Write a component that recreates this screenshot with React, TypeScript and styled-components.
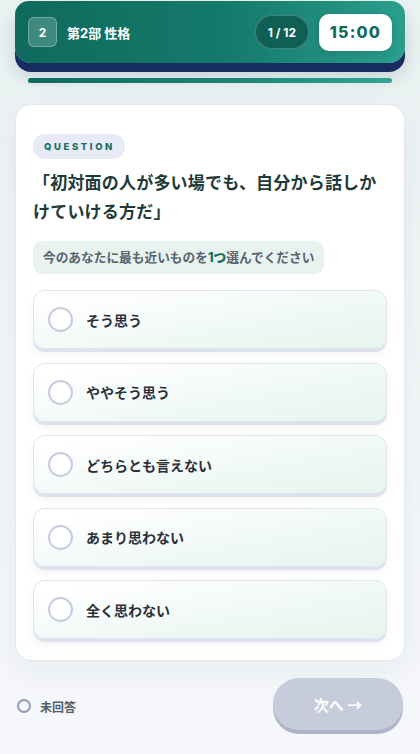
import React from 'react';
import styled, { createGlobalStyle } from 'styled-components';

const GlobalStyle = createGlobalStyle`
  html, body {
    margin: 0;
    padding: 0;
  }
  body {
    font-family: "Inter", "Noto Sans CJK JP", sans-serif;
    background: linear-gradient(180deg, #e9f1f1 0%, #f1f5f6 45%, #f6f7fa 100%);
    min-height: 754px;
  }
  * { box-sizing: border-box; }
`

const Screen = styled.div`
  width: 420px;
  min-height: 754px;
  padding: 1px 15px 0;
  display: flex;
  flex-direction: column;
`

const Header = styled.header`
  height: 62px;
  border-radius: 14px 14px 16px 16px;
  background: linear-gradient(90deg, #0f6a5d 0%, #157a6b 55%, #2a9e8c 100%);
  box-shadow: 0 9px 0 #172c60, 0 14px 18px rgba(20, 60, 70, 0.18);
  display: flex;
  align-items: center;
  padding: 0 13px;
  gap: 10px;
`

const PartBadge = styled.div`
  width: 29px;
  height: 30px;
  border-radius: 6px;
  background: rgba(255, 255, 255, 0.2);
  border: 1px solid rgba(255, 255, 255, 0.28);
  color: #fff;
  font-size: 12px;
  font-weight: 700;
  display: flex;
  align-items: center;
  justify-content: center;
`

const PartTitle = styled.div`
  color: #fff;
  font-size: 13px;
  font-weight: 700;
  flex: 1;
`

const Counter = styled.div`
  height: 34px;
  padding: 0 12px;
  border-radius: 17px;
  background: #0f5f55;
  border: 1px solid rgba(255, 255, 255, 0.22);
  color: #fff;
  font-size: 12px;
  font-weight: 700;
  display: flex;
  align-items: center;
`

const Timer = styled.div`
  height: 37px;
  width: 73px;
  border-radius: 10px;
  background: #fff;
  color: #12695c;
  font-size: 16px;
  font-weight: 800;
  letter-spacing: 1.2px;
  display: flex;
  align-items: center;
  justify-content: center;
  box-shadow: 0 2px 6px rgba(0, 0, 0, 0.12);
`

const Progress = styled.div`
  margin: 15px 13px 0;
  height: 5px;
  border-radius: 3px;
  background: linear-gradient(90deg, #0f6a5d 0%, #1b8473 55%, #2ea692 100%);
`

const Card = styled.section`
  margin-top: 21px;
  background: #fff;
  border-radius: 16px;
  border: 1px solid #e3e8ee;
  box-shadow: 0 10px 30px rgba(40, 70, 90, 0.06);
  padding: 29px 17px 21px;
`

const Tag = styled.div`
  display: inline-flex;
  align-items: center;
  height: 25px;
  padding: 0 10px 0 11px;
  border-radius: 12px;
  background: #e8ebf7;
  color: #15705f;
  font-size: 9.5px;
  font-weight: 800;
  letter-spacing: 2.6px;
`

const Question = styled.h2`
  margin: 10px 0 0;
  font-size: 17px;
  line-height: 29px;
  font-weight: 700;
  letter-spacing: 0.2px;
  color: #1e3b37;
`

const Hint = styled.div`
  display: inline-block;
  margin-top: 14px;
  padding: 0 10px;
  height: 33px;
  line-height: 33px;
  border-radius: 9px;
  background: #e8f3f0;
  color: #56626e;
  font-size: 12.7px;
  font-weight: 700;
  b {
    color: #15705f;
    font-weight: 800;
  }
`

const Options = styled.ul`
  list-style: none;
  margin: 16px 0 0;
  padding: 0;
  display: flex;
  flex-direction: column;
  gap: 13.5px;
`

const Option = styled.li`
  height: 59px;
  border-radius: 12px;
  border: 1px solid #dfe5ea;
  background: linear-gradient(170deg, #ffffff 10%, #f1f9f7 55%, #e6f4f1 100%);
  box-shadow: 0 3px 0 #dde1ed, 0 6px 10px rgba(60, 80, 110, 0.06);
  display: flex;
  align-items: center;
  padding-left: 14px;
  gap: 13px;
  font-size: 14px;
  font-weight: 700;
  color: #2b303a;
`

const Radio = styled.span<{ $size: number }>`
  width: ${p => p.$size}px;
  height: ${p => p.$size}px;
  border-radius: 50%;
  background: #fff;
  border: 2px solid #c6cbe0;
  flex-shrink: 0;
`

const Footer = styled.footer`
  margin-top: 17px;
  display: flex;
  align-items: center;
  justify-content: space-between;
  padding: 0 2px;
`

const Status = styled.div`
  display: flex;
  align-items: center;
  gap: 9px;
  font-size: 12px;
  font-weight: 700;
  color: #555d6b;
  ${Radio} {
    border-color: #8f9dbb;
    background: transparent;
  }
`

const NextButton = styled.button`
  width: 130px;
  height: 52px;
  border: none;
  border-radius: 26px;
  background: #c6ccdc;
  box-shadow: 0 4px 0 #aeb5c9;
  color: #fff;
  font-family: "Noto Sans CJK JP", sans-serif;
  font-size: 15px;
  font-weight: 700;
  margin-bottom: 4px;
`

const choices = ['そう思う', 'ややそう思う', 'どちらとも言えない', 'あまり思わない', '全く思わない'];

const App = () => {
  return (
    <Screen>
      <GlobalStyle />
      <Header>
        <PartBadge>2</PartBadge>
        <PartTitle>第2部 性格</PartTitle>
        <Counter>1 / 12</Counter>
        <Timer>15:00</Timer>
      </Header>
      <Progress />
      <Card>
        <Tag>QUESTION</Tag>
        <Question>「初対面の人が多い場でも、自分から話しかけていける方だ」</Question>
        <Hint>今のあなたに最も近いものを<b>1つ</b>選んでください</Hint>
        <Options>
          {choices.map(c => (
            <Option key={c}>
              <Radio $size={25} />
              {c}
            </Option>
          ))}
        </Options>
      </Card>
      <Footer>
        <Status>
          <Radio $size={14} />
          未回答
        </Status>
        <NextButton>次へ →</NextButton>
      </Footer>
    </Screen>
  )
};
export default App
